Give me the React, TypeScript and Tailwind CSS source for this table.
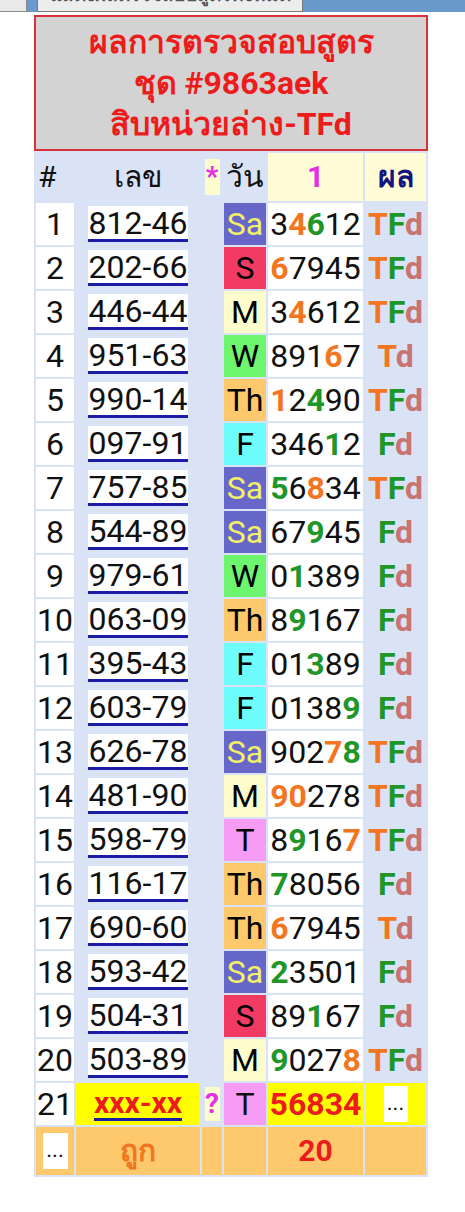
import React from 'react'

type Tone = 'k' | 'o' | 'g'

interface Row {
  n: number
  num: string
  day: string
  digits: string
  tones: string
  result: 'TFd' | 'Td' | 'Fd'
}

const rows: Row[] = [
  { n: 1, num: '812-46', day: 'Sa', digits: '34612', tones: 'kogkk', result: 'TFd' },
  { n: 2, num: '202-66', day: 'S', digits: '67945', tones: 'okkkk', result: 'TFd' },
  { n: 3, num: '446-44', day: 'M', digits: '34612', tones: 'kokkk', result: 'TFd' },
  { n: 4, num: '951-63', day: 'W', digits: '89167', tones: 'kkkok', result: 'Td' },
  { n: 5, num: '990-14', day: 'Th', digits: '12490', tones: 'okgkk', result: 'TFd' },
  { n: 6, num: '097-91', day: 'F', digits: '34612', tones: 'kkkgk', result: 'Fd' },
  { n: 7, num: '757-85', day: 'Sa', digits: '56834', tones: 'gkokk', result: 'TFd' },
  { n: 8, num: '544-89', day: 'Sa', digits: '67945', tones: 'kkgkk', result: 'Fd' },
  { n: 9, num: '979-61', day: 'W', digits: '01389', tones: 'kgkkk', result: 'Fd' },
  { n: 10, num: '063-09', day: 'Th', digits: '89167', tones: 'kgkkk', result: 'Fd' },
  { n: 11, num: '395-43', day: 'F', digits: '01389', tones: 'kkgkk', result: 'Fd' },
  { n: 12, num: '603-79', day: 'F', digits: '01389', tones: 'kkkkg', result: 'Fd' },
  { n: 13, num: '626-78', day: 'Sa', digits: '90278', tones: 'kkkog', result: 'TFd' },
  { n: 14, num: '481-90', day: 'M', digits: '90278', tones: 'ookkk', result: 'TFd' },
  { n: 15, num: '598-79', day: 'T', digits: '89167', tones: 'kgkko', result: 'TFd' },
  { n: 16, num: '116-17', day: 'Th', digits: '78056', tones: 'gkkkk', result: 'Fd' },
  { n: 17, num: '690-60', day: 'Th', digits: '67945', tones: 'okkkk', result: 'Td' },
  { n: 18, num: '593-42', day: 'Sa', digits: '23501', tones: 'gkkkk', result: 'Fd' },
  { n: 19, num: '504-31', day: 'S', digits: '89167', tones: 'kkgkk', result: 'Fd' },
  { n: 20, num: '503-89', day: 'M', digits: '90278', tones: 'gkkko', result: 'TFd' },
]

const dayStyle: Record<string, string> = {
  Sa: 'bg-[#6767c9] text-[#f2f06a]',
  S: 'bg-[#f23a62] text-black',
  M: 'bg-[#fffccb] text-black',
  W: 'bg-[#6ef56e] text-black',
  Th: 'bg-[#fdc96c] text-black',
  F: 'bg-[#6efcfc] text-black',
  T: 'bg-[#f79cf4] text-black',
}

const toneStyle: Record<Tone, string> = {
  k: 'text-[#111]',
  o: 'text-[#f2761f] font-bold',
  g: 'text-[#1f9628] font-bold',
}

function Result({ value }: { value: string }) {
  return (
    <span className="font-bold">
      {value.split('').map((ch, i) => (
        <span
          key={i}
          className={
            ch === 'T' ? 'text-[#f2761f]' : ch === 'F' ? 'text-[#1f9628]' : 'text-[#c97373]'
          }
        >
          {ch}
        </span>
      ))}
    </span>
  )
}

export default function App() {
  return (
    <div className="min-h-[1212px] bg-white font-[Roboto,'Noto_Sans',Tahoma,sans-serif] text-[#111]">
      {/* Top strip, the button label is scrolled mostly out of view */}
      <div className="h-[12px] flex bg-[#6a9acd] overflow-hidden">
        <div className="w-[27px] bg-[#e9e9e9] border-r border-b border-[#8a8a8a]" />
        <div className="ml-[10px] w-[266px] h-[12px] bg-[#ededed] border border-t-0 border-[#7a7a7a] overflow-hidden">
          <div className="-mt-[19px] h-[30px] text-center text-[19px] font-bold text-[#555] leading-[28px] whitespace-nowrap">
            แสดงผลตรวจสอบสูตรทั้งหมด
          </div>
        </div>
      </div>

      {/* Title box */}
      <div className="ml-[34px] mt-[3px] w-[394px] h-[136px] bg-[#d3d3d3] border-2 border-[#d8313a] flex flex-col justify-center items-center">
        <div className="text-[#ec1c1c] font-bold text-[32px] leading-[41px] text-center">
          <div>ผลการตรวจสอบสูตร</div>
          <div>ชุด #9863aek</div>
          <div>สิบหน่วยล่าง-TFd</div>
        </div>
      </div>

      {/* Table */}
      <div className="ml-[34px] w-[394px] bg-[#dae2f5] p-[2px] grid grid-cols-[38px_124px_20px_42px_95px_61px] gap-[2px] text-[32px] leading-none">
        {/* header */}
        <div className="h-[48px] flex items-center pl-[2px] text-[30px]">#</div>
        <div className="h-[48px] flex items-center justify-center text-[30px]">เลข</div>
        <div className="h-[48px] flex items-center justify-center">
          <span className="bg-[#fffccb] w-[15px] h-[36px] flex items-start justify-center pt-[4px] text-[#e62ee6] font-bold text-[28px]">
            *
          </span>
        </div>
        <div className="h-[48px] flex items-center justify-center text-[30px]">วัน</div>
        <div className="h-[48px] flex items-center justify-center bg-[#fffcd6] text-[#e62ee6] font-bold text-[30px]">
          1
        </div>
        <div className="h-[48px] flex items-center justify-center bg-[#fffcd6] text-[#14147e] font-bold text-[30px]">
          ผล
        </div>

        {rows.map((r) => (
          <React.Fragment key={r.n}>
            <div className="h-[42px] bg-white flex items-center justify-center">{r.n}</div>
            <div className="h-[42px] flex items-center justify-center">
              <span className="bg-white h-[36px] px-[1px] flex items-center border-b-[3px] border-[#1c1ca6]">
                {r.num}
              </span>
            </div>
            <div className="h-[42px]" />
            <div className={`h-[42px] flex items-center justify-center ${dayStyle[r.day]}`}>{r.day}</div>
            <div className="h-[42px] bg-white flex items-center justify-center">
              {r.digits.split('').map((d, i) => (
                <span key={i} className={toneStyle[r.tones[i] as Tone]}>
                  {d}
                </span>
              ))}
            </div>
            <div className="h-[42px] flex items-center justify-center">
              <Result value={r.result} />
            </div>
          </React.Fragment>
        ))}

        {/* row 21 */}
        <div className="h-[42px] bg-white flex items-center justify-center">21</div>
        <div className="h-[42px] bg-[#ffff00] flex items-center justify-center">
          <span className="h-[34px] flex items-center border-b-[3px] border-[#1c1ca6] text-[#ec1c1c] font-bold text-[30px]">
            xxx-xx
          </span>
        </div>
        <div className="h-[42px] flex items-center justify-center">
          <span className="bg-[#fffccb] w-[15px] h-[34px] flex items-center justify-center text-[#e62ee6] font-bold text-[28px]">
            ?
          </span>
        </div>
        <div className="h-[42px] bg-[#f79cf4] flex items-center justify-center">T</div>
        <div className="h-[42px] bg-[#ffff00] flex items-center justify-center text-[#ec1c1c] font-bold">
          56834
        </div>
        <div className="h-[42px] bg-[#ffff00] flex items-center justify-center">
          <span className="bg-white w-[24px] h-[36px] flex items-end justify-center pb-[8px] text-[22px]">
            ...
          </span>
        </div>

        {/* footer */}
        <div className="h-[48px] bg-[#fdc96c] flex items-center justify-center">
          <span className="bg-white w-[25px] h-[36px] flex items-end justify-center pb-[8px] text-[22px]">
            ...
          </span>
        </div>
        <div className="h-[48px] bg-[#fdc96c] flex items-center justify-center text-[#f2761f] font-bold text-[30px]">
          ถูก
        </div>
        <div className="h-[48px] bg-[#fdc96c]" />
        <div className="h-[48px] bg-[#fdc96c]" />
        <div className="h-[48px] bg-[#fdc96c] flex items-center justify-center text-[#ec1c1c] font-bold text-[30px]">
          20
        </div>
        <div className="h-[48px] bg-[#fdc96c]" />
      </div>
    </div>
  )
}
